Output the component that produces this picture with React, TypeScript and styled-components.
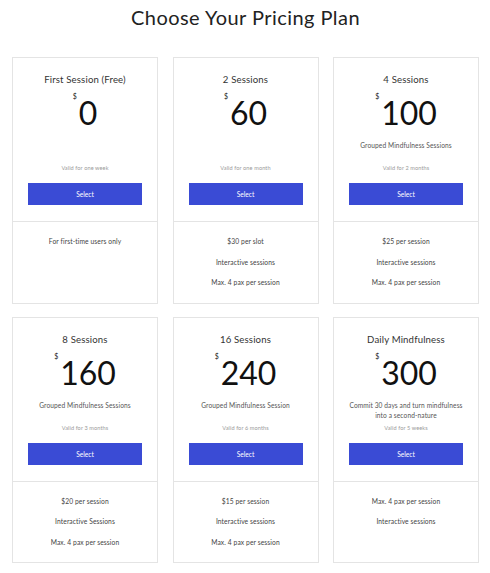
import React from "react";
import styled, { createGlobalStyle } from "styled-components";

const GlobalStyle = createGlobalStyle`
  html, body { margin: 0; padding: 0; background: #ffffff; }
  body { font-family: "Lato", "Open Sans", sans-serif; color: #222; }
`;

const Page = styled.div`
  width: 490px;
  min-height: 573px;
  box-sizing: border-box;
  padding: 5px 11px 0 12px;
`;

const Heading = styled.h1`
  margin: 0 0 28px;
  font-size: 20px;
  line-height: 24px;
  font-weight: 400;
  text-align: center;
  color: #222;
  letter-spacing: 0.45px;
`;

const Grid = styled.div`
  display: grid;
  grid-template-columns: repeat(3, 146px);
  column-gap: 14.5px;
  row-gap: 13px;
`;

const Card = styled.div`
  display: flex;
  flex-direction: column;
  border: 1px solid #e4e4e4;
  background: #fff;
`;

const Top = styled.div`
  display: flex;
  flex-direction: column;
  align-items: center;
  padding: 15px 15px 16px;
  border-bottom: 1px solid #e4e4e4;
`;

const Title = styled.div`
  font-size: 9.6px;
  line-height: 14px;
  color: #333;
  letter-spacing: 0.15px;
`;

const PriceRow = styled.div`
  display: flex;
  align-items: flex-start;
  margin-top: 9px;
  height: 34px;
`;

const Currency = styled.span`
  font-size: 7px;
  line-height: 8px;
  margin-top: -4px;
  margin-right: 2px;
  color: #222;
`;

const Amount = styled.span`
  font-size: 32px;
  line-height: 34px;
  font-weight: 400;
  color: #111;
`;

const Desc = styled.div`
  margin-top: 10px;
  height: 20px;
  font-size: 6.6px;
  line-height: 10px;
  color: #555;
  text-align: center;
  letter-spacing: 0.1px;
`;

const Valid = styled.div`
  margin-top: 4px;
  font-size: 5.6px;
  line-height: 8px;
  color: #9a9a9a;
  letter-spacing: 0.1px;
`;

const Button = styled.button`
  margin-top: 11px;
  width: 100%;
  height: 22px;
  border: none;
  background: #3a4bd5;
  color: #fff;
  font-family: inherit;
  font-size: 6.6px;
  padding: 0;
  cursor: pointer;
`;

const Features = styled.ul`
  list-style: none;
  margin: 0;
  padding: 9px 8px 10px;
`;

const Feature = styled.li`
  font-size: 6.7px;
  line-height: 20.5px;
  color: #444;
  text-align: center;
  letter-spacing: 0.1px;
`;

type Plan = {
  title: string;
  price: string;
  desc?: string[];
  valid: string;
  features: string[];
};

const plans: Plan[] = [
  { title: "First Session (Free)", price: "0", valid: "Valid for one week", features: ["For first-time users only"] },
  { title: "2 Sessions", price: "60", valid: "Valid for one month", features: ["$30 per slot", "Interactive sessions", "Max. 4 pax per session"] },
  { title: "4 Sessions", price: "100", desc: ["Grouped Mindfulness Sessions"], valid: "Valid for 2 months", features: ["$25 per session", "Interactive sessions", "Max. 4 pax per session"] },
  { title: "8 Sessions", price: "160", desc: ["Grouped Mindfulness Sessions"], valid: "Valid for 3 months", features: ["$20 per session", "Interactive Sessions", "Max. 4 pax per session"] },
  { title: "16 Sessions", price: "240", desc: ["Grouped Mindfulness Session"], valid: "Valid for 6 months", features: ["$15 per session", "Interactive sessions", "Max. 4 pax per session"] },
  { title: "Daily Mindfulness", price: "300", desc: ["Commit 30 days and turn mindfulness", "into a second-nature"], valid: "Valid for 5 weeks", features: ["Max. 4 pax per session", "Interactive sessions"] },
];

export default function App() {
  return (
    <Page>
      <GlobalStyle />
      <Heading>Choose Your Pricing Plan</Heading>
      <Grid>
        {plans.map((p) => (
          <Card key={p.title}>
            <Top>
              <Title>{p.title}</Title>
              <PriceRow>
                <Currency>$</Currency>
                <Amount>{p.price}</Amount>
              </PriceRow>
              <Desc>
                {(p.desc || []).map((d) => (
                  <div key={d}>{d}</div>
                ))}
              </Desc>
              <Valid>{p.valid}</Valid>
              <Button>Select</Button>
            </Top>
            <Features>
              {p.features.map((f) => (
                <Feature key={f}>{f}</Feature>
              ))}
            </Features>
          </Card>
        ))}
      </Grid>
    </Page>
  );
}
